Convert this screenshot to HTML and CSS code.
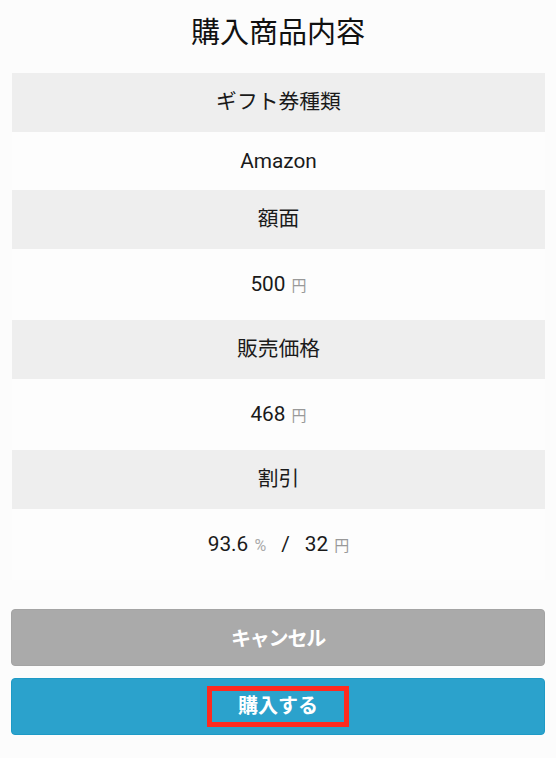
FILE: index.html
```html
<!DOCTYPE html>
<html lang="ja">
<head>
<meta charset="utf-8">
<title>購入商品内容</title>
<link rel="stylesheet" href="styles.css">
</head>
<body>
<div class="page">
  <h1 class="title">購入商品内容</h1>
  <div class="table">
    <div class="cell head">ギフト券種類</div>
    <div class="cell val">Amazon</div>
    <div class="cell head">額面</div>
    <div class="cell val tall">500 <span class="unit">円</span></div>
    <div class="cell head">販売価格</div>
    <div class="cell val tall">468 <span class="unit">円</span></div>
    <div class="cell head">割引</div>
    <div class="cell val tall">93.6 <span class="unit pct">%</span><span class="sep">/</span>32 <span class="unit">円</span></div>
  </div>
  <div class="actions">
    <button class="btn cancel">キャンセル</button>
    <button class="btn buy"><span class="mark">購入する</span></button>
  </div>
</div>
</body>
</html>
```

FILE: styles.css
```css
html, body {
  margin: 0;
  background: #fcfcfc;
}
body {
  font-family: "Roboto", "Noto Sans CJK JP", sans-serif;
  color: #1a1a1a;
}
.page {
  padding: 0 11px;
}
.title {
  margin: 0 0 23px;
  padding-top: 16px;
  font-size: 29px;
  line-height: 34px;
  font-weight: 400;
  text-align: center;
  color: #111;
}
.table {
  margin-left: 1px;
  display: flex;
  flex-direction: column;
}
.cell {
  text-align: center;
  font-size: 20.8px;
  line-height: 28px;
  height: 28px;
  padding: 15px 0 15.5px;
}
.head {
  background: #eeeeee;
}
.val {
  background: #fdfdfd;
}
.val.tall {
  padding: 21.5px 0 22px;
}
.unit {
  font-size: 15px;
  line-height: 1;
  color: #999;
  margin-left: 1px;
}
.unit.pct {
  font-size: 16px;
  color: #aaa;
}
.sep {
  margin: 0 15px 0 15px;
}
.actions {
  margin-top: 29px;
  display: flex;
  flex-direction: column;
  gap: 12px;
}
.btn {
  display: block;
  width: 100%;
  height: 57px;
  border-radius: 4px;
  font-family: "Roboto", "Noto Sans CJK JP", sans-serif;
  font-size: 20px;
  font-weight: 700;
  color: #fff;
  padding: 0;
}
.cancel {
  background: #aaaaaa;
  border: 1px solid #a4a4a4;
  letter-spacing: -1.2px;
}
.buy {
  background: #2ba2cc;
  border: 1px solid #1e9ac6;
}
.mark {
  display: inline-block;
  border: 5px solid #ff2a1f;
  padding: 1px 26px 2px;
  line-height: 28px;
}
```
